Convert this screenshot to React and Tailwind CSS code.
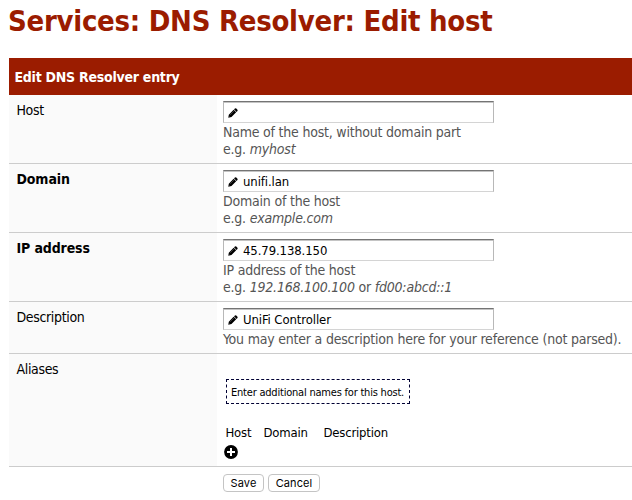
import React from "react";

function Pencil() {
  return (
    <svg className="mt-px h-[10px] w-[10px] shrink-0" viewBox="0 0 11 11">
      <path d="M0.3 10.8 L0.9 7.3 L6.2 1.9 L9 4.7 L3.8 10 Z M6.6 1.5 L7.7 0.5 Q8.4 0 9.1 0.6 L10.4 1.9 Q10.9 2.6 10.4 3.3 L9.4 4.3 Z" fill="#000" />
      <path d="M1 9.1 L1.9 10 M2.4 7.5 L6.5 3.4" stroke="#888" strokeWidth="0.5" />
    </svg>
  );
}

function Field({ value }) {
  return (
    <div className="mb-px flex h-[22px] w-[271px] items-center border border-[#b8b8b8] border-b-[#d4d4d4] border-t-[#747474] bg-white pl-[4px] pt-px shadow-[inset_0_1px_0_#c4c4c4]">
      <Pencil />
      <span className="ml-[5px] text-[13px] leading-[17px] tracking-[-0.1px] text-black">{value}</span>
    </div>
  );
}

function Row({ label, bold, height, children }) {
  return (
    <div className={`flex border-b border-[#cccccc] ${height}`}>
      <div className="w-[208px] shrink-0 bg-[#fafafa] pl-[7.5px] pt-[7px] text-black">
        <span className={bold ? "font-bold tracking-[-0.12px]" : "tracking-[-0.35px]"}>{label}</span>
      </div>
      <div className="pl-[6px] pt-[6px] tracking-[-0.21px] text-[#555555]">{children}</div>
    </div>
  );
}

export default function App() {
  return (
    <div className="h-[500px] w-[632px] overflow-hidden whitespace-nowrap bg-white pl-[9px] font-['DejaVu_Sans_Condensed','DejaVu_Sans',sans-serif] text-[14px] leading-[17px] [font-stretch:condensed]">
      <h1 className="-ml-px h-[58px] pt-[3px] text-[29px] font-bold leading-[36px] tracking-[-0.28px] text-[#9b1c00]">
        Services: DNS Resolver: Edit host
      </h1>
      <div className="flex h-[37px] items-center bg-[#9b1c00] pl-[5.5px] pt-px font-bold tracking-[-0.25px] text-white">
        Edit DNS Resolver entry
      </div>
      <Row label="Host" height="h-[69px]">
        <Field value="" />
        <div>Name of the host, without domain part</div>
        <div>e.g. <i>myhost</i></div>
      </Row>
      <Row label="Domain" bold height="h-[69px]">
        <Field value="unifi.lan" />
        <div>Domain of the host</div>
        <div>e.g. <i>example.com</i></div>
      </Row>
      <Row label="IP address" bold height="h-[69px]">
        <Field value="45.79.138.150" />
        <div>IP address of the host</div>
        <div>e.g. <i>192.168.100.100</i> or <i>fd00:abcd::1</i></div>
      </Row>
      <Row label="Description" height="h-[52px]">
        <Field value="UniFi Controller" />
        <div>You may enter a description here for your reference (not parsed).</div>
      </Row>
      <Row label="Aliases" height="h-[113px]">
        <div className="ml-[3px] mt-[19px] flex h-[25px] w-[184px] items-center border border-dashed border-[#000033] pl-[4px] pt-px text-[11px] text-black">
          Enter additional names for this host.
        </div>
        <div className="ml-[2.5px] mt-[20px] flex text-[13px] tracking-[-0.2px] text-black">
          <span className="w-[38px]">Host</span>
          <span className="w-[60px]">Domain</span>
          <span>Description</span>
        </div>
        <svg className="ml-px mt-[4px] h-[14px] w-[14px]" viewBox="0 0 14 14">
          <circle cx="7" cy="7" r="6.9" fill="#000" />
          <path d="M7 3v8M3 7h8" stroke="#fff" strokeWidth="2" />
        </svg>
      </Row>
      <div className="flex gap-[5px] pl-[214px] pt-[7px] font-['Inter','Liberation_Sans',sans-serif] text-[11px] text-black [font-stretch:normal]">
        <button className="h-[18px] w-[41px] rounded-[4px] border border-[#c4c4c4] bg-white leading-[15px] tracking-[0.1px]">Save</button>
        <button className="-ml-px h-[18px] w-[52px] rounded-[4px] border border-[#c4c4c4] bg-white leading-[15px] tracking-[0.1px]">Cancel</button>
      </div>
    </div>
  );
}
